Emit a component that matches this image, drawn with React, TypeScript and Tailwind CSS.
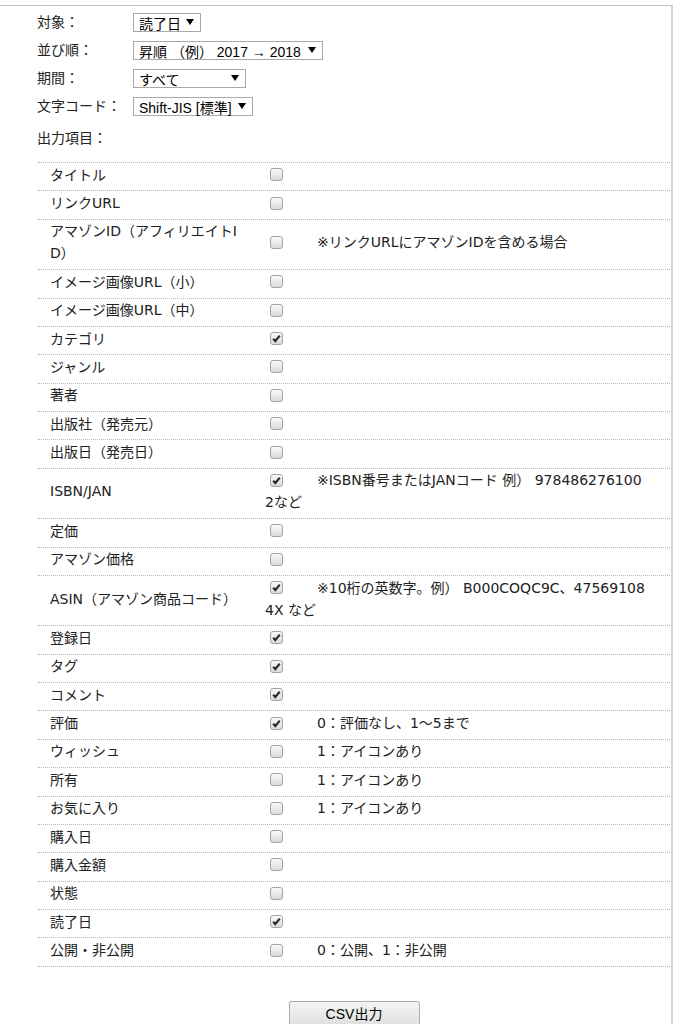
import React from "react";

type Item = { label: string; checked?: boolean; note?: string };

const ITEMS: Item[] = [
  { label: "タイトル" },
  { label: "リンクURL" },
  { label: "アマゾンID（アフィリエイトID）", note: "※リンクURLにアマゾンIDを含める場合" },
  { label: "イメージ画像URL（小）" },
  { label: "イメージ画像URL（中）" },
  { label: "カテゴリ", checked: true },
  { label: "ジャンル" },
  { label: "著者" },
  { label: "出版社（発売元）" },
  { label: "出版日（発売日）" },
  { label: "ISBN/JAN", checked: true, note: "※ISBN番号またはJANコード 例） 9784862761002など" },
  { label: "定価" },
  { label: "アマゾン価格" },
  { label: "ASIN（アマゾン商品コード）", checked: true, note: "※10桁の英数字。例） B000COQC9C、475691084X など" },
  { label: "登録日", checked: true },
  { label: "タグ", checked: true },
  { label: "コメント", checked: true },
  { label: "評価", checked: true, note: "0：評価なし、1〜5まで" },
  { label: "ウィッシュ", note: "1：アイコンあり" },
  { label: "所有", note: "1：アイコンあり" },
  { label: "お気に入り", note: "1：アイコンあり" },
  { label: "購入日" },
  { label: "購入金額" },
  { label: "状態" },
  { label: "読了日", checked: true },
  { label: "公開・非公開", note: "0：公開、1：非公開" },
];

function FakeSelect({ value, width }: { value: string; width: string }) {
  return (
    <div
      className={`${width} h-[19px] flex items-center justify-between border border-[#a9a9a9] bg-white pl-[5px] pr-[6px] text-[14px] leading-none text-black font-['Liberation_Sans','Noto_Sans_CJK_JP',sans-serif]`}
    >
      <span className="pt-[3px] whitespace-nowrap">{value}</span>
      <svg width="8" height="6" viewBox="0 0 8 6" className="shrink-0 ml-[4px]">
        <path d="M0 0 H8 L4 6 Z" fill="#000" />
      </svg>
    </div>
  );
}

function FormRow({ label, children }: { label: string; children?: React.ReactNode }) {
  return (
    <div className="flex items-center h-[28px]">
      <div className="w-[96px] shrink-0 pt-[1px]">{label}</div>
      {children}
    </div>
  );
}

function Check({ checked }: { checked?: boolean }) {
  return (
    <span className="inline-block align-middle relative -top-[1px] ml-[5px] mr-[34px] w-[13px] h-[13px] rounded-[3px] border border-[#a3a3a3] bg-gradient-to-b from-[#fafafa] to-[#dadada]">
      {checked && (
        <svg width="11" height="11" viewBox="0 0 11 11" className="absolute left-0 top-0">
          <path d="M2.2 5.8 L4.3 8 L8.8 2.6" stroke="#2a2a2a" strokeWidth="2.2" fill="none" />
        </svg>
      )}
    </span>
  );
}

export default function App() {
  return (
    <div className="bg-white min-h-screen font-['DejaVu_Sans','Noto_Sans_CJK_JP',sans-serif] text-[14px] text-[#222]">
      <div className="mt-[5px] w-[673px] border-t border-r-2 border-t-[#c4c4c4] border-r-[#d4d4d4] pt-[2px] pb-[40px]">
        <div className="pl-[37px]">
          <FormRow label="対象：">
            <FakeSelect value="読了日" width="w-[68px]" />
          </FormRow>
          <FormRow label="並び順：">
            <FakeSelect value="昇順 （例） 2017 → 2018" width="w-[190px]" />
          </FormRow>
          <FormRow label="期間：">
            <FakeSelect value="すべて" width="w-[113px]" />
          </FormRow>
          <FormRow label="文字コード：">
            <FakeSelect value="Shift-JIS [標準]" width="w-[120px]" />
          </FormRow>
          <div className="mt-[4px]">
            <FormRow label="出力項目：" />
          </div>
        </div>

        <div className="ml-[38px] w-[632px] mt-[10px] border-t border-dotted border-[#b8b8b8]">
          {ITEMS.map((item) => (
            <div
              key={item.label}
              className="flex items-center border-b border-dotted border-[#b8b8b8] py-[2.7px] leading-[22px]"
            >
              <div className="relative -top-[2px] w-[227px] shrink-0 pl-[12px] pr-[20px] break-all">{item.label}</div>
              <div className="relative -top-[2px] flex-1 min-w-0 pr-[23px] break-all">
                <Check checked={item.checked} />
                {item.note && <span>{item.note}</span>}
              </div>
            </div>
          ))}
        </div>

        <div className="ml-[38px] w-[632px] mt-[34px] flex justify-center">
          <button className="w-[131px] h-[27px] rounded-[2px] border border-[#acacac] bg-gradient-to-b from-[#f4f4f4] to-[#dedede] text-[14px] text-black font-['Liberation_Sans','Noto_Sans_CJK_JP',sans-serif]">
            CSV出力
          </button>
        </div>
      </div>
    </div>
  );
}
